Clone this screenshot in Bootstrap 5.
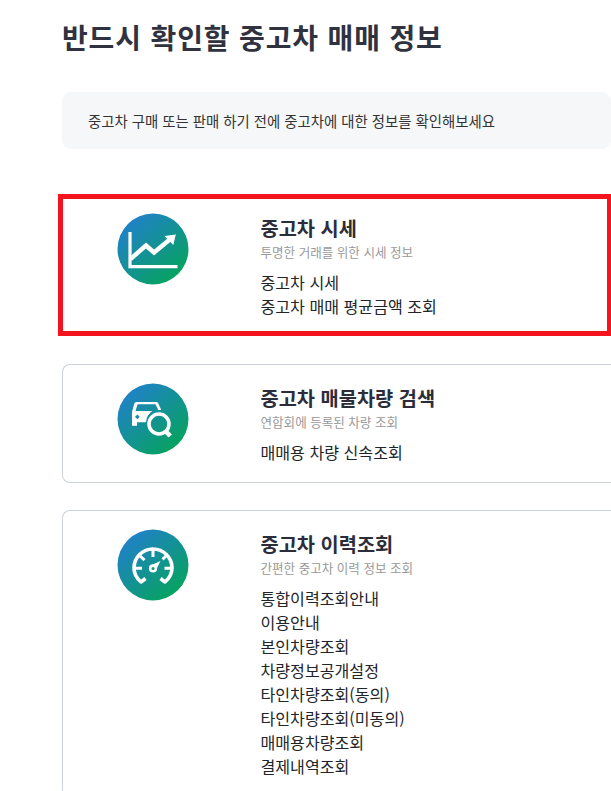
<!DOCTYPE html>
<html lang="ko">
<head>
<meta charset="utf-8">
<meta name="viewport" content="width=device-width, initial-scale=1">
<title>중고차 매매 정보</title>
<link href="https://cdn.jsdelivr.net/npm/bootstrap@5.3.0/dist/css/bootstrap.min.css" rel="stylesheet">
<style>
  body { font-family: "Noto Sans CJK KR", sans-serif; color: #212529; overflow: hidden; height: 791px; }
  .page-wrap { padding: 14px 0 0 62px; }
  .page-title { font-size: 28px; letter-spacing: .85px; line-height: 46px; margin-bottom: 32px; color: #30323f; }
  .notice { height: 57px; border-radius: 9px; padding-left: 26px; background: #f6f7f9; color: #333; font-size: 14.4px; margin-bottom: 45px; }
  .info-card { border: 1px solid #cdd3d8; border-right: 0; border-radius: 8px 0 0 8px; margin-bottom: 27px; padding: 18px 0 18px 54px; gap: 71.5px; }
  .info-card.picked { border: 5px solid #f4141e; border-right-width: 4px; border-radius: 0; margin: 0 0 28px -4px; padding: 14px 0 13px 54px; }
  .round-icon { width: 72px; height: 72px; flex: none; }
  .card-name { font-size: 19.75px; line-height: 24px; color: #2c2d3a; padding-top: 3px; }
  .card-note { font-size: 12.55px; line-height: 19px; color: #999; margin: 2px 0 9px; }
  .links { font-size: 16.1px; line-height: 24px; }
</style>
<script src="https://cdn.jsdelivr.net/npm/bootstrap@5.3.0/dist/js/bootstrap.bundle.min.js"></script>
</head>
<body class="bg-white">
<svg width="0" height="0" class="position-absolute" aria-hidden="true">
  <defs>
    <linearGradient id="disc" x1="0.1" y1="0.1" x2="0.8" y2="0.9">
      <stop offset="0" stop-color="#2180cc"/><stop offset="1" stop-color="#07a261"/>
    </linearGradient>
  </defs>
</svg>
<main class="page-wrap">
  <h1 class="page-title fw-bold text-nowrap">반드시 확인할 중고차 매매 정보</h1>
  <div class="notice d-flex align-items-center text-nowrap">중고차 구매 또는 판매 하기 전에 중고차에 대한 정보를 확인해보세요</div>

  <section class="info-card picked d-flex align-items-start">
    <svg class="round-icon" viewBox="0 0 72 72">
      <circle cx="36" cy="36" r="35.5" fill="url(#disc)"/>
      <path d="M13 19V53.7H60.5" fill="none" stroke="#fff" stroke-width="3.2"/>
      <path d="M13.5 46L29 32.5L37 39.5L54 25.5" fill="none" stroke="#fff" stroke-width="4.4"/>
      <path d="M47.5 23L58.8 21.5L56.3 32Z" fill="#fff"/>
    </svg>
    <div>
      <h2 class="card-name fw-bold mb-0">중고차 시세</h2>
      <p class="card-note">투명한 거래를 위한 시세 정보</p>
      <ul class="links list-unstyled mb-0">
        <li>중고차 시세</li>
        <li>중고차 매매 평균금액 조회</li>
      </ul>
    </div>
  </section>

  <section class="info-card d-flex align-items-start">
    <svg class="round-icon" viewBox="0 0 72 72">
      <circle cx="36" cy="36" r="35.5" fill="url(#disc)"/>
      <path fill="#fff" fill-rule="evenodd" d="M19.3 19H39Q40.6 19 41.2 20.3L44.3 27H41.3L38.5 21.3H20.6L18.5 28H35.5Q31 31 29.8 35.5L28.8 39.3H20V42.7H15V29L17.3 20.6Q17.8 19 19.3 19ZM20.5 31.4L22.7 33.8L20.5 36.2L18 33.8Z"/>
      <circle cx="42" cy="41" r="10" fill="none" stroke="#fff" stroke-width="3.5"/>
      <path d="M48.5 48L53.2 53" fill="none" stroke="#fff" stroke-width="4.6"/>
    </svg>
    <div>
      <h2 class="card-name fw-bold mb-0">중고차 매물차량 검색</h2>
      <p class="card-note">연합회에 등록된 차량 조회</p>
      <ul class="links list-unstyled mb-0">
        <li>매매용 차량 신속조회</li>
      </ul>
    </div>
  </section>

  <section class="info-card d-flex align-items-start">
    <svg class="round-icon" viewBox="0 0 72 72">
      <circle cx="36" cy="36" r="35.5" fill="url(#disc)"/>
      <g fill="none" stroke="#fff" stroke-width="3.6" stroke-linejoin="round">
        <path d="M28.5 49.5L24 53Q17 47 17 39A19 19 0 0 1 55 39Q55 47 48 53L43.5 49.5"/>
        <path stroke-width="3" d="M36 20V28M18 39.3H25M47.5 39.3H54M22.5 26.5L27.5 31.2M49.5 26.5L45.5 30.3"/>
      </g>
      <path d="M43.5 32L33.5 36.5L38.8 41.5Z" fill="#fff"/>
      <circle cx="36" cy="39.4" r="4.1" fill="#fff"/>
      <circle cx="36" cy="39.5" r="1.5" fill="#10968c"/>
    </svg>
    <div>
      <h2 class="card-name fw-bold mb-0">중고차 이력조회</h2>
      <p class="card-note">간편한 중고차 이력 정보 조회</p>
      <ul class="links list-unstyled mb-0">
        <li>통합이력조회안내</li>
        <li>이용안내</li>
        <li>본인차량조회</li>
        <li>차량정보공개설정</li>
        <li>타인차량조회(동의)</li>
        <li>타인차량조회(미동의)</li>
        <li>매매용차량조회</li>
        <li>결제내역조회</li>
      </ul>
    </div>
  </section>
</main>
</body>
</html>
